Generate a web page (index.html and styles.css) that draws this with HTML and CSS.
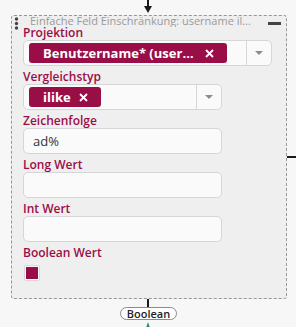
FILE: index.html
```html
<!DOCTYPE html>
<html lang="de">
<head>
    <meta charset="UTF-8">
    <meta name="viewport" content="width=device-width, initial-scale=1.0">
    <title>Feld Einschränkung</title>
    <link rel="stylesheet" href="styles.css">
</head>
<body>
    <div class="canvas">
        <!-- incoming connector -->
        <div class="wire wire-in"></div>
        <div class="arrow-head"></div>

        <div class="node">
            <!-- Node header -->
            <div class="node-head">
                <svg class="drag-handle" width="5" height="13" viewBox="0 0 5 13">
                    <circle cx="2.5" cy="2" r="1.7" fill="#444"/>
                    <circle cx="2.5" cy="6.5" r="1.7" fill="#444"/>
                    <circle cx="2.5" cy="11" r="1.7" fill="#444"/>
                </svg>
                <span class="node-title">Einfache Feld Einschränkung: username ilike ad%</span>
                <span class="collapse"></span>
            </div>

            <div class="node-body">
                <div class="field">
                    <label>Projektion</label>
                    <div class="select wide">
                        <div class="select-values">
                            <span class="tag">
                                <span class="tag-text clip">Benutzername* (username)</span>
                                <svg class="tag-remove" width="9" height="9" viewBox="0 0 9 9">
                                    <path d="M1 1L8 8M8 1L1 8" stroke="#fff" stroke-width="1.8"/>
                                </svg>
                            </span>
                        </div>
                        <div class="select-toggle"><span class="caret"></span></div>
                    </div>
                </div>

                <div class="field">
                    <label>Vergleichstyp</label>
                    <div class="select">
                        <div class="select-values">
                            <span class="tag">
                                <span class="tag-text">ilike</span>
                                <svg class="tag-remove" width="9" height="9" viewBox="0 0 9 9">
                                    <path d="M1 1L8 8M8 1L1 8" stroke="#fff" stroke-width="1.8"/>
                                </svg>
                            </span>
                        </div>
                        <div class="select-toggle"><span class="caret"></span></div>
                    </div>
                </div>

                <div class="field">
                    <label>Zeichenfolge</label>
                    <input type="text" value="ad%">
                </div>

                <div class="field">
                    <label>Long Wert</label>
                    <input type="text">
                </div>

                <div class="field">
                    <label>Int Wert</label>
                    <input type="text">
                </div>

                <div class="field">
                    <label>Boolean Wert</label>
                    <span class="checkbox"><span class="checkbox-mark"></span></span>
                </div>
            </div>
        </div>

        <!-- outgoing connectors -->
        <div class="wire wire-right"></div>
        <div class="wire wire-out"></div>
        <div class="port-label">Boolean</div>
        <div class="port-pin"></div>
    </div>
</body>
</html>
```

FILE: styles.css
```css
:root {
    --accent: #9a0e47;
    --border: #d6d6d6;
    --node-bg: #efefef;
    --canvas-bg: #f7f7f7;
    --wire: #1a1a1a;
}

* {
    margin: 0;
    padding: 0;
    box-sizing: border-box;
    font-family: 'Open Sans', 'Liberation Sans', sans-serif;
}

body {
    background: var(--canvas-bg);
    overflow: hidden;
}

.canvas {
    position: relative;
    width: 296px;
    height: 327px;
    padding: 15px 0 0 11px;
}

.node {
    width: 276px;
    height: 284px;
    border: 1px dashed #979797;
    border-radius: 3px;
    background: var(--node-bg);
}

.node-head {
    display: flex;
    align-items: flex-start;
    height: 10px;
    padding: 0 5px 0 2px;
}

.drag-handle {
    flex: none;
    margin-top: 1px;
}

.node-title {
    flex: 0 0 222px;
    margin: -1px 0 0 11px;
    font-size: 11px;
    line-height: 12px;
    color: #9a9a9a;
    white-space: nowrap;
    overflow: hidden;
    text-overflow: ellipsis;
}

.collapse {
    width: 13px;
    height: 2.5px;
    margin: 6px 0 0 auto;
    background: #444;
}

.node-body {
    padding: 0 11px;
}

.field {
    margin-bottom: 4px;
}

label {
    display: block;
    font-size: 12px;
    line-height: 14px;
    font-weight: 600;
    color: var(--accent);
}

.select {
    display: flex;
    width: 199px;
    height: 26px;
    border: 1px solid var(--border);
    border-radius: 5px;
    background: #fafafa;
}

.select.wide {
    width: 249px;
}

.select-values {
    flex: 1;
    display: flex;
    align-items: center;
    padding-left: 5px;
}

.tag {
    display: flex;
    align-items: center;
    height: 20px;
    padding: 0 13px 0 14px;
    border-radius: 3px;
    background: var(--accent);
    color: #fff;
    font-size: 13px;
    font-weight: 700;
    white-space: nowrap;
}

.tag-text.clip {
    width: 154px;
    overflow: hidden;
    text-overflow: ellipsis;
}

.tag-remove {
    margin-left: 8px;
}

.select-toggle {
    flex: 0 0 25px;
    display: flex;
    align-items: center;
    justify-content: center;
    border-left: 1px solid var(--border);
}

.caret {
    width: 0;
    height: 0;
    border-left: 4px solid transparent;
    border-right: 4px solid transparent;
    border-top: 4px solid #8c8c8c;
}

input {
    display: block;
    width: 199px;
    height: 26px;
    padding: 0 9px;
    border: 1px solid var(--border);
    border-radius: 5px;
    background: #fafafa;
    font-size: 13px;
    color: #333;
}

.checkbox {
    display: flex;
    align-items: center;
    justify-content: center;
    width: 16px;
    height: 16px;
    margin: 5px 0 0 1px;
    border: 1px solid #d8d8d8;
    border-radius: 2px;
    background: #fafafa;
}

.checkbox-mark {
    width: 12px;
    height: 12px;
    background: var(--accent);
}

/* diagram wiring */
.wire {
    position: absolute;
    background: var(--wire);
}

.wire-in {
    left: 147px;
    top: 0;
    width: 1.5px;
    height: 8px;
}

.arrow-head {
    position: absolute;
    left: 144px;
    top: 6px;
    width: 0;
    height: 0;
    border-left: 4px solid transparent;
    border-right: 4px solid transparent;
    border-top: 7px solid var(--wire);
}

.wire-right {
    left: 287px;
    top: 156px;
    width: 9px;
    height: 1.5px;
}

.wire-out {
    left: 147px;
    top: 299px;
    width: 1.5px;
    height: 9px;
}

.port-label {
    position: absolute;
    left: 120px;
    top: 307px;
    width: 57px;
    height: 13px;
    border: 1px solid #8a8a8a;
    border-radius: 7px;
    background: #fff;
    font-size: 11px;
    font-weight: 600;
    line-height: 11px;
    text-align: center;
    color: #222;
}

.port-pin {
    position: absolute;
    left: 146px;
    top: 322px;
    width: 0;
    height: 0;
    border-left: 2.5px solid transparent;
    border-right: 2.5px solid transparent;
    border-bottom: 6px solid #2a8c7c;
}
```
